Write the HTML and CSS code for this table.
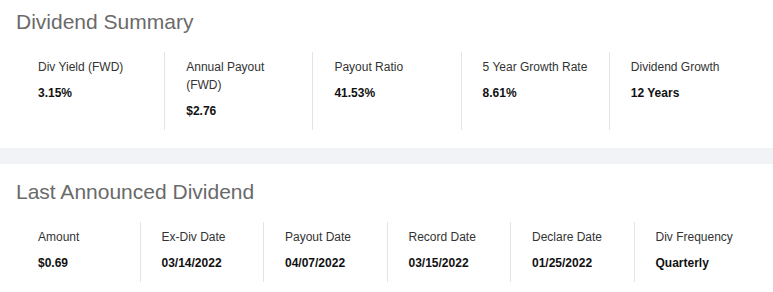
FILE: index.html
```html
<!DOCTYPE html>
<html lang="en">
<head>
<meta charset="utf-8">
<title>Dividend Summary</title>
<link rel="stylesheet" href="styles.css">
</head>
<body>
<section class="panel panel-first">
  <h2 class="panel-title">Dividend Summary</h2>
  <div class="stats">
    <div class="stat"><div class="stat-label">Div Yield (FWD)</div><div class="stat-value">3.15%</div></div>
    <div class="stat"><div class="stat-label">Annual Payout<br>(FWD)</div><div class="stat-value">$2.76</div></div>
    <div class="stat"><div class="stat-label">Payout Ratio</div><div class="stat-value">41.53%</div></div>
    <div class="stat"><div class="stat-label">5 Year Growth Rate</div><div class="stat-value">8.61%</div></div>
    <div class="stat"><div class="stat-label">Dividend Growth</div><div class="stat-value">12 Years</div></div>
  </div>
</section>
<div class="band"></div>
<section class="panel panel-last">
  <h2 class="panel-title">Last Announced Dividend</h2>
  <div class="stats">
    <div class="stat"><div class="stat-label">Amount</div><div class="stat-value">$0.69</div></div>
    <div class="stat"><div class="stat-label">Ex-Div Date</div><div class="stat-value">03/14/2022</div></div>
    <div class="stat"><div class="stat-label">Payout Date</div><div class="stat-value">04/07/2022</div></div>
    <div class="stat"><div class="stat-label">Record Date</div><div class="stat-value">03/15/2022</div></div>
    <div class="stat"><div class="stat-label">Declare Date</div><div class="stat-value">01/25/2022</div></div>
    <div class="stat"><div class="stat-label">Div Frequency</div><div class="stat-value">Quarterly</div></div>
  </div>
</section>
</body>
</html>
```
FILE: styles.css
```css
* { box-sizing: border-box; }
html, body {
  margin: 0;
  padding: 0;
  background: #fff;
  font-family: "Liberation Sans", Arial, sans-serif;
}
.panel {
  padding: 16px 16px 18px 16px;
}
.panel-first {
  padding-top: 10px;
}
.panel-last {
  padding-bottom: 10px;
}
.panel-title {
  margin: 0 0 18px 0;
  font-size: 21px;
  line-height: 24px;
  font-weight: 400;
  color: #6a6a6a;
}
.stats {
  display: flex;
}
.stat {
  flex: 1 1 0;
  min-width: 0;
  padding: 6px 8px 10px 21px;
  border-left: 1px solid #e4e4e4;
}
.stat:first-child {
  border-left-color: transparent;
}
.stat-label {
  font-size: 12px;
  line-height: 18px;
  color: #333;
}
.stat-value {
  margin-top: 8px;
  font-size: 12px;
  line-height: 18px;
  font-weight: 700;
  color: #111;
}
.band {
  height: 16px;
  background: #f2f3f7;
}
```
